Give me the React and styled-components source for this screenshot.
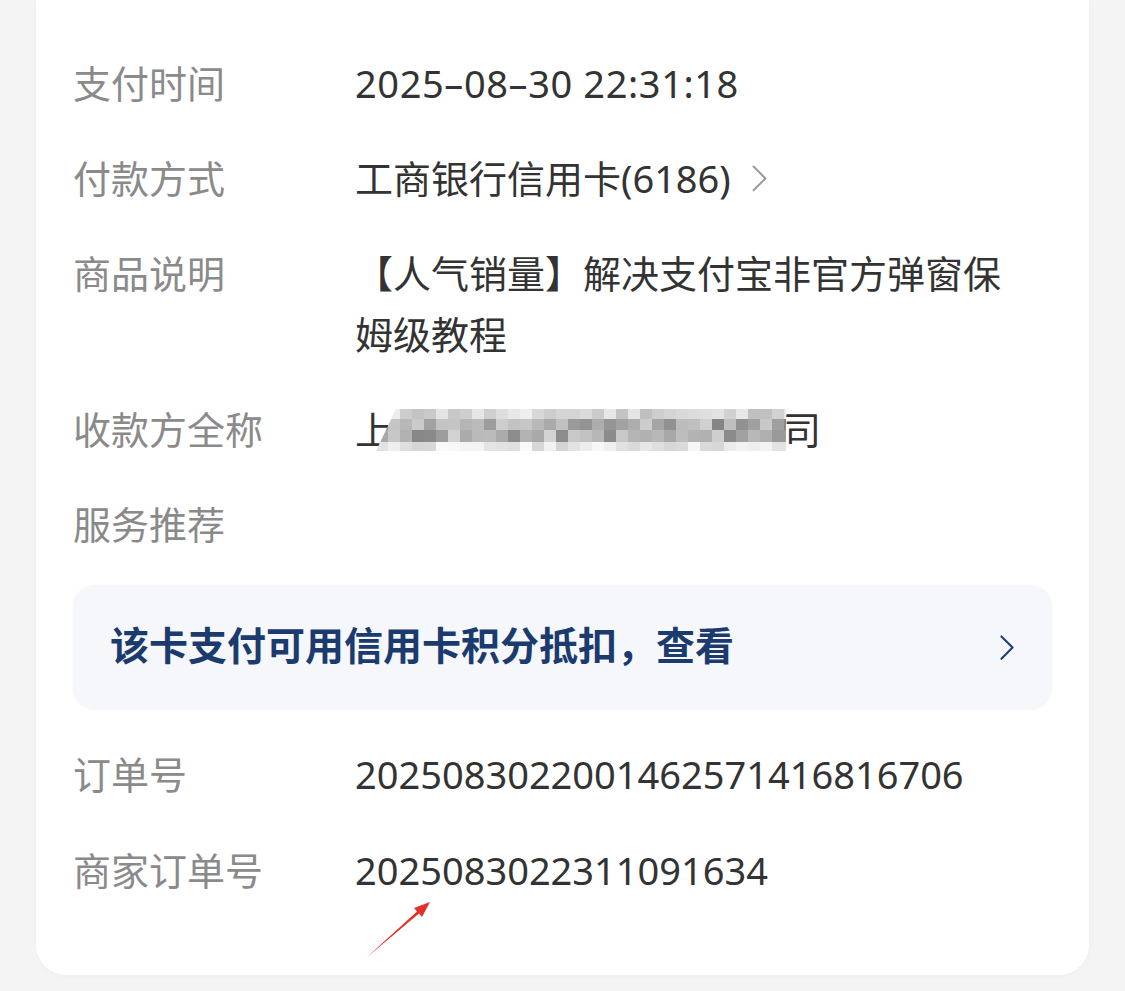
import styled, { createGlobalStyle } from 'styled-components';

const GlobalStyle = createGlobalStyle`
  html, body {
    margin: 0;
    padding: 0;
    background: #f4f4f4;
  }
  body {
    font-family: "Noto Sans", "Noto Sans CJK SC", sans-serif;
  }
`;

const rows = [
  { label: '支付时间', value: '2025–08–30 22:31:18' },
  { label: '付款方式', value: '工商银行信用卡(6186)', arrow: true },
  { label: '商品说明', value: '【人气销量】解决支付宝非官方弹窗保姆级教程' },
  { label: '收款方全称', blurred: true },
  { label: '服务推荐' },
];

const orderRows = [
  { label: '订单号', value: '2025083022001462571416816706' },
  { label: '商家订单号', value: '2025083022311091634' },
];

// pseudo-random mosaic shades for the hidden payee name
const mosaic = (() => {
  const cells = [];
  let seed = 11;
  const rand = () => {
    seed = (seed * 9301 + 49297) % 233280;
    return seed / 233280;
  };
  const ranges = [
    [190, 50],
    [130, 85],
    [132, 80],
    [212, 38],
  ];
  const heights = [10, 11, 12, 9];
  let y = 0;
  for (let r = 0; r < 4; r++) {
    for (let c = 0; c < 35; c++) {
      const [base, spread] = ranges[r];
      const shade = Math.round(base + rand() * spread);
      cells.push({ x: c * 12, y, h: heights[r], fill: `rgb(${shade},${shade},${shade})` });
    }
    y += heights[r];
  }
  return cells;
})();

const Chevron = ({ color, size = 18, weight = 1.3 }) => (
  <svg width={size} height={size * 1.7} viewBox="0 0 10 17" fill="none">
    <path d="M1.5 1.5 L8.5 8.5 L1.5 15.5" stroke={color} strokeWidth={weight} strokeLinecap="round" strokeLinejoin="round" />
  </svg>
);

const App = () => {
  return (
    <>
      <GlobalStyle />
      <Page>
        <Card>
          <List>
            {rows.map((row) => (
              <Row key={row.label}>
                <Label>{row.label}</Label>
                {row.blurred ? (
                  <Value>
                    上
                    <Mosaic width="410" height="42" viewBox="0 0 410 42">
                      <defs>
                        <clipPath id="mosaic-edge">
                          <polygon points="20,0 410,0 410,42 0,42" />
                        </clipPath>
                      </defs>
                      <g clipPath="url(#mosaic-edge)">
                        {mosaic.map((m, i) => (
                          <rect key={i} x={m.x} y={m.y} width="12" height={m.h} fill={m.fill} />
                        ))}
                      </g>
                    </Mosaic>
                    司
                  </Value>
                ) : (
                  <Value $date={row.label === '支付时间'}>
                    {row.value}
                    {row.arrow && (
                      <ArrowWrap>
                        <Chevron color="#9a9a9a" size={17} weight={1.2} />
                      </ArrowWrap>
                    )}
                  </Value>
                )}
              </Row>
            ))}
          </List>
          <Banner>
            <BannerText>该卡支付可用信用卡积分抵扣，查看</BannerText>
            <Chevron color="#1d3f73" size={16} />
          </Banner>
          <List $gap={35}>
            {orderRows.map((row) => (
              <Row key={row.label}>
                <Label>{row.label}</Label>
                <Value>{row.value}</Value>
              </Row>
            ))}
          </List>
          <Pointer width="72" height="66" viewBox="0 0 72 66">
            <polygon points="4,62 55,15.4 52,12 68,6 60,21 57,17.6" fill="#e5302a" />
          </Pointer>
        </Card>
      </Page>
    </>
  );
};

const Page = styled.div`
  width: 1125px;
  height: 991px;
  padding: 0 36px;
  box-sizing: border-box;
  overflow: hidden;
`;

const Card = styled.div`
  position: relative;
  background: #fff;
  height: 975px;
  border-radius: 0 0 30px 30px;
  padding: 53px 37px 0;
  box-sizing: border-box;
  box-shadow: 0 1px 4px rgba(0, 0, 0, 0.03);
`;

const List = styled.div`
  display: flex;
  flex-direction: column;
  gap: ${(p) => p.$gap || 34}px;
`;

const Row = styled.div`
  display: grid;
  grid-template-columns: 282px 670px;
  font-size: 38px;
  line-height: 61px;
`;

const Label = styled.div`
  color: #8a8a8a;
`;

const Value = styled.div`
  color: #333;
  display: flex;
  flex-wrap: wrap;
  align-items: center;
  letter-spacing: ${(p) => (p.$date ? '0.6px' : 'normal')};
`;

const ArrowWrap = styled.span`
  display: inline-flex;
  margin-left: 20px;
`;

const Mosaic = styled.svg`
  margin-left: -17px;
  margin-right: -3px;
`;

const Banner = styled.div`
  display: flex;
  align-items: center;
  justify-content: space-between;
  height: 125px;
  margin: 30px 0 34px;
  padding: 0 37px;
  box-sizing: border-box;
  background: #f5f7fa;
  border-radius: 22px;
  box-shadow: 0 0 3px rgba(0, 0, 0, 0.04);
`;

const BannerText = styled.span`
  font-size: 39px;
  line-height: 61px;
  font-weight: 700;
  color: #1b3b6f;
  margin-top: -6px;
`;

const Pointer = styled.svg`
  position: absolute;
  left: 326px;
  top: 896px;
`;

export default App;
